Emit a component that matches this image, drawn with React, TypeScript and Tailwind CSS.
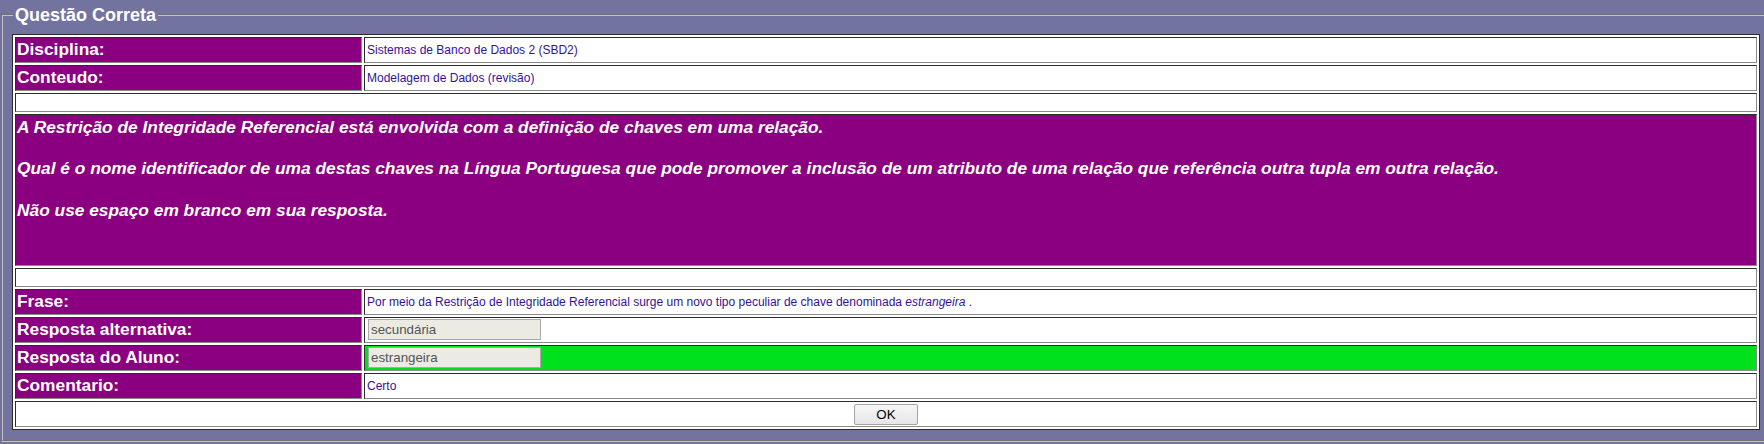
import React from "react";

const cellBorder =
  "border border-solid border-t-[#2b2b2b] border-l-[#2b2b2b] border-b-[#8a8a8a] border-r-[#8a8a8a]";
const labelCell =
  "border border-solid border-t-[#2b2b2b] border-l-[#2b2b2b] border-b-[#8a8a8a] border-r-[#8a8a8a] bg-[#8b0080] text-white font-bold text-[17.33px] leading-[19px] align-top pt-[2px] px-px h-[26px]";
const valueCell =
  "border border-solid border-t-[#2b2b2b] border-l-[#2b2b2b] border-b-[#8a8a8a] border-r-[#8a8a8a] text-[12px] leading-[14px] text-[#33119e] align-middle pl-[2px] h-[26px]";
const inputCls =
  "ml-px block h-[21px] w-[173px] border border-solid border-[#a9a9a9] bg-[#ebebe4] px-[2px] text-[13.33px] text-[#545454] outline-none";

function Row({ label, children, green }: { label: string; children: React.ReactNode; green?: boolean }) {
  return (
    <tr>
      <td className={labelCell}>{label}</td>
      <td className={`${valueCell} ${green ? "bg-[#00e11e]" : "bg-white"}`}>{children}</td>
    </tr>
  );
}

function EmptyRow() {
  return (
    <tr>
      <td colSpan={2} className={`${cellBorder} bg-white h-[19px] p-0`}></td>
    </tr>
  );
}

export default function App() {
  return (
    <div className="min-h-screen bg-[#7373a0] pt-[5px] font-['Liberation_Sans',Arial,sans-serif]">
      <fieldset className="ml-px w-[1763px] border-2 border-r-0 [border-style:groove] border-[#c4c4c4] pt-[8px] pl-[9px] pb-[10px]">
        <legend className="ml-px px-[2px] text-[18px] font-bold text-white leading-[20.7px]">Questão Correta</legend>
        <table className="w-[1748px] table-fixed border-separate border-spacing-[2px] border border-solid border-[#2b2b2b] bg-white">
          <colgroup>
            <col className="w-[347px]" />
            <col />
          </colgroup>
          <tbody>
            <Row label="Disciplina:">Sistemas de Banco de Dados 2 (SBD2)</Row>
            <Row label="Conteudo:">Modelagem de Dados (revisão)</Row>
            <EmptyRow />
            <tr>
              <td
                colSpan={2}
                className={`${cellBorder} bg-[#8b0080] text-white font-bold italic text-[17.33px] leading-[20.8px] align-top pt-[2px] px-px h-[152px]`}
              >
                A Restrição de Integridade Referencial está envolvida com a definição de chaves em uma relação.
                <br />
                <br />
                Qual é o nome identificador de uma destas chaves na Língua Portuguesa que pode promover a inclusão de um atributo de uma relação que referência outra tupla em outra relação.
                <br />
                <br />
                Não use espaço em branco em sua resposta.
              </td>
            </tr>
            <EmptyRow />
            <Row label="Frase:">
              Por meio da Restrição de Integridade Referencial surge um novo tipo peculiar de chave denominada{" "}
              <i>estrangeira</i> .
            </Row>
            <Row label="Resposta alternativa:">
              <input className={inputCls} readOnly defaultValue="secundária" />
            </Row>
            <Row label="Resposta do Aluno:" green>
              <input className={inputCls} readOnly defaultValue="estrangeira" />
            </Row>
            <Row label="Comentario:">Certo</Row>
            <tr>
              <td colSpan={2} className={`${cellBorder} bg-white h-[26px] text-center align-middle p-0`}>
                <button className="inline-block h-[21px] w-[64px] rounded-[2px] border border-solid border-[#a3a3a3] bg-[linear-gradient(#f6f6f6,#e6e6e6)] text-[13.33px] leading-[19px] text-black align-middle">
                  OK
                </button>
              </td>
            </tr>
          </tbody>
        </table>
      </fieldset>
    </div>
  );
}
